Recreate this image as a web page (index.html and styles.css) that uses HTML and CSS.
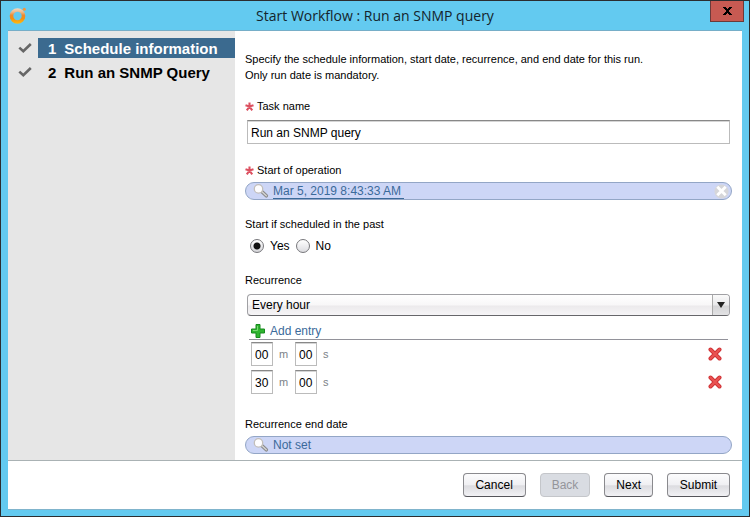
FILE: index.html
```html
<!DOCTYPE html>
<html lang="en">
<head>
<meta charset="utf-8">
<title>Start Workflow : Run an SNMP query</title>
<link rel="stylesheet" href="styles.css">
</head>
<body>
<svg class="defs" aria-hidden="true">
  <defs>
    <linearGradient id="ring" gradientUnits="userSpaceOnUse" x1="0" y1="2" x2="0" y2="18">
      <stop offset="0" stop-color="#f3dcc4"/>
      <stop offset=".25" stop-color="#efb98c"/>
      <stop offset=".45" stop-color="#ee8a30"/>
      <stop offset=".65" stop-color="#f58f10"/>
      <stop offset="1" stop-color="#ffbe10"/>
    </linearGradient>
    <symbol id="check" viewBox="0 0 14 10"><path d="M1.300 4.600 5.300 8.200 12.800 1" fill="none" stroke="#666" stroke-width="2.600"/></symbol>
    <symbol id="star" viewBox="0 0 9 9"><path d="M4.500 .5v4M.5 3.200l4 1.300 4-1.300M1.800 8.300l2.700-3.800L7.200 8.300" stroke="#dc5060" stroke-width="2.100" fill="none"/></symbol>
    <symbol id="lens" viewBox="0 0 16 15">
      <path d="M9 7.800 13.300 11.800" stroke="#8a8a8a" stroke-width="3.600" stroke-linecap="round"/>
      <path d="M9 7.800 13.300 11.800" stroke="#d4d4d4" stroke-width="1.400" stroke-linecap="round"/>
      <circle cx="5.500" cy="4.900" r="4.200" fill="#fdfdff" stroke="#c3bfba" stroke-width="1.300"/>
    </symbol>
    <symbol id="cross" viewBox="0 0 14 14">
      <path d="M2.500 2.500 11.500 11.500M11.500 2.500 2.500 11.500" stroke="#cf3034" stroke-width="4" stroke-linecap="round"/>
      <path d="M2.500 2.500 11.500 11.500M11.500 2.500 2.500 11.500" stroke="#ea5352" stroke-width="2.200" stroke-linecap="round"/>
    </symbol>
  </defs>
</svg>
<div class="window">
  <header class="titlebar">
    <svg class="logo" viewBox="0 0 18 18" aria-hidden="true">
      <circle cx="9.500" cy="10" r="6" fill="none" stroke="url(#ring)" stroke-width="3.600"/>
      <circle cx="16.300" cy="3.300" r="1.500" fill="#f5963a"/>
    </svg>
    <h1 class="title">Start Workflow : Run an SNMP query</h1>
    <button class="close" type="button" aria-label="Close">
      <svg class="close-icon" viewBox="0 0 9 8" aria-hidden="true"><path d="M0 0h3v1h1v1h1V1h1V0h3v1H8v1H7v1H6v2h1v1h1v1h1v1H6V7H5V6H4v1H3v1H0V7h1V6h1V5h1V3H2V2H1V1H0z" fill="#000"/></svg>
    </button>
  </header>
  <div class="body">
    <nav class="steps">
      <div class="step">
        <svg class="check"><use href="#check"/></svg>
        <a class="step-link current" href="#schedule"><span>1</span><span>Schedule information</span></a>
      </div>
      <div class="step">
        <svg class="check"><use href="#check"/></svg>
        <a class="step-link" href="#query"><span>2</span><span>Run an SNMP Query</span></a>
      </div>
    </nav>
    <form class="form" id="schedule">
      <p class="intro">Specify the schedule information, start date, recurrence, and end date for this run.<br>Only run date is mandatory.</p>

      <div class="field">
        <label class="label" for="task"><svg class="star"><use href="#star"/></svg>Task name</label>
        <input class="text" id="task" type="text" value="Run an SNMP query">
      </div>

      <div class="field">
        <div class="label"><svg class="star"><use href="#star"/></svg>Start of operation</div>
        <div class="pill">
          <svg class="lens"><use href="#lens"/></svg>
          <a class="pill-link dated" href="#start">Mar 5, 2019 8:43:33 AM</a>
          <button class="clear" type="button" aria-label="Clear start date">
            <svg class="clear-icon" viewBox="0 0 16 16" aria-hidden="true"><circle cx="8" cy="8" r="7.500" fill="#d6d6d9"/><path d="M3.500 3l9 9M12.500 3l-9 9" stroke="#fff" stroke-width="3"/></svg>
          </button>
        </div>
      </div>

      <fieldset class="field">
        <legend class="label">Start if scheduled in the past</legend>
        <div class="radios">
          <label class="choice"><input class="radio" type="radio" name="past" checked>Yes</label>
          <label class="choice"><input class="radio" type="radio" name="past">No</label>
        </div>
      </fieldset>

      <div class="field">
        <label class="label" for="recurrence">Recurrence</label>
        <div class="select-box">
          <select class="select" id="recurrence"><option>Every hour</option></select>
        </div>
        <div class="entries">
          <button class="add" type="button">
            <svg class="plus" viewBox="0 0 14 14" aria-hidden="true"><path d="M5 .5h4V5h4.500v4H9v4.500H5V9H.5V5H5z" fill="#2fb52f" stroke="#168a1e" stroke-linejoin="round"/><path d="M6.500 2v4.500H2" fill="none" stroke="#7bd873"/></svg>
            Add entry
          </button>
          <div class="entry">
            <input class="text time" type="text" value="00" aria-label="Minutes"><span class="unit">m</span>
            <input class="text time" type="text" value="00" aria-label="Seconds"><span class="unit">s</span>
            <button class="remove" type="button" aria-label="Remove entry"><svg class="cross"><use href="#cross"/></svg></button>
          </div>
          <div class="entry">
            <input class="text time" type="text" value="30" aria-label="Minutes"><span class="unit">m</span>
            <input class="text time" type="text" value="00" aria-label="Seconds"><span class="unit">s</span>
            <button class="remove" type="button" aria-label="Remove entry"><svg class="cross"><use href="#cross"/></svg></button>
          </div>
        </div>
      </div>

      <div class="field">
        <div class="label">Recurrence end date</div>
        <div class="pill">
          <svg class="lens"><use href="#lens"/></svg>
          <a class="pill-link" href="#end">Not set</a>
        </div>
      </div>
    </form>
  </div>
  <footer class="footer">
    <button class="btn wide" type="button">Cancel</button>
    <button class="btn" type="button" disabled>Back</button>
    <button class="btn" type="button">Next</button>
    <button class="btn wide" type="submit" form="schedule">Submit</button>
  </footer>
</div>
</body>
</html>
```
FILE: styles.css
```css
* { box-sizing: border-box; }

body {
  margin: 0;
  font: 12px/16px "Liberation Sans", Arial, sans-serif;
  color: #000;
}

svg { display: block; flex: none; }
.defs { position: absolute; width: 0; height: 0; }
input, select, button { font: inherit; color: inherit; margin: 0; }
button { border: 0; padding: 0; background: none; }

.window {
  display: flex;
  flex-direction: column;
  min-height: 100vh;
  padding: 0 7px 6px;
  border: 1px solid #2b2d30;
  background: #63caf0;
}

.titlebar {
  display: flex;
  align-items: flex-start;
  height: 30px;
  border-bottom: 1px solid #76aec8;
}
.logo { width: 18px; height: 18px; margin-top: 5px; }
.title {
  flex: 1;
  margin: 0;
  padding-left: 14px;
  font: 14px/30px "Open Sans", "Noto Sans", sans-serif;
  text-align: center;
  color: #14242c;
}
.close {
  display: grid;
  place-items: center;
  width: 34px;
  height: 21px;
  margin-right: -2px;
  border: 1px solid #6b3a3a;
  border-top: 0;
  background: #c75a52;
}
.close-icon { width: 9px; height: 8px; }

.body { display: flex; flex: 1; background: #fff; }

.steps {
  flex: none;
  width: 227px;
  padding-top: 7px;
  background: #e6e6e6;
}
.step {
  display: flex;
  align-items: center;
  height: 20px;
  margin-bottom: 4px;
  padding-left: 10px;
}
.check { width: 14px; height: 10px; margin-right: 6px; }
.step-link {
  display: flex;
  flex: 1;
  gap: 8px;
  padding-left: 10px;
  font-size: 15px;
  font-weight: bold;
  line-height: 21px;
  height: 20px;
  color: #000;
  text-decoration: none;
}
.step-link.current { background: #3b6a8f; color: #fff; }

.form { flex: 1; min-width: 0; padding: 20px 10px 6px; }
.intro { margin: 0 0 15px; font-size: 11px; }

.field { margin: 0; padding: 0; border: 0; }
.field + .field { margin-top: 16px; }
.label {
  display: flex;
  align-items: center;
  gap: 3px;
  margin-bottom: 4px;
  padding: 0;
  font-size: 11px;
}
.star { width: 9px; height: 9px; }

.text {
  display: block;
  width: calc(100% - 4px);
  height: 24px;
  margin: 6px 2px 18px;
  padding: 2px 3px 0;
  border: 1px solid #bbb;
  border-top-color: #888;
  background: #fff;
  box-shadow: inset 0 1px #d5d5d5;
}

.pill {
  display: flex;
  align-items: center;
  height: 18px;
  padding: 0 2px 0 7px;
  border: 1px solid #93a6c6;
  border-radius: 9px;
  background: #cdd6f6;
}
.lens { width: 16px; height: 15px; }
.pill-link {
  height: 16px;
  margin-left: 4px;
  line-height: 17px;
  color: #3b6a9a;
  text-decoration: none;
}
.dated { padding-right: 3px; border-bottom: 1px solid #3b6a9a; }
.clear { margin-left: auto; }
.clear-icon { width: 15px; height: 15px; }

.radios { display: flex; gap: 6px; padding-left: 5px; }
.choice { display: flex; align-items: center; gap: 6px; height: 20px; }
.radio {
  appearance: none;
  width: 14px;
  height: 14px;
  border: 1px solid #77777b;
  border-radius: 50%;
  background: linear-gradient(#fff, #dcdce0);
}
.radio:checked { background: radial-gradient(circle, #111 3px, transparent 4px), linear-gradient(#fff, #d4d4d8); }

.select-box { position: relative; margin: 6px 2px 0; }
.select {
  display: block;
  appearance: none;
  width: 100%;
  height: 22px;
  padding: 0 20px 0 4px;
  border: 1px solid #a0a0a4;
  border-bottom-color: #66666a;
  border-radius: 4px;
  background: linear-gradient(#fff, #f8f7f8 50%, #eceaec 55%, #f6f5f7);
}
.select-box::before {
  content: "";
  position: absolute;
  top: 1px;
  right: 1px;
  bottom: 1px;
  width: 16px;
  border-left: 1px solid #aaa;
  border-radius: 0 3px 3px 0;
  background: linear-gradient(#fafafa, #e8e8ea 50%, #d4d4d6 55%, #e2e2e4);
  pointer-events: none;
}
.select-box::after {
  content: "";
  position: absolute;
  top: 8px;
  right: 5px;
  border: solid transparent;
  border-width: 6px 4px 0;
  border-top-color: #222;
  pointer-events: none;
}

.entries { margin: 7px 4px 20px; }
.add {
  display: flex;
  align-items: center;
  gap: 5px;
  width: 100%;
  height: 17px;
  padding-left: 2px;
  border-bottom: 1px solid #92929a;
  color: #3b6a9a;
}
.plus { width: 14px; height: 14px; }
.entry { display: flex; align-items: center; padding: 2px; }
.time { width: 22px; margin: 0; }
.unit { width: 22px; padding-left: 6px; font-size: 11px; color: #7b8288; }
.remove { margin-left: auto; margin-right: 4px; }
.cross { width: 14px; height: 14px; }

.footer {
  display: flex;
  align-items: flex-start;
  justify-content: flex-end;
  gap: 14px;
  padding: 12px;
  border-top: 1px solid #aab2b4;
  border-bottom: 1px solid #80b4cc;
  background: #fff;
}
.btn {
  height: 24px;
  padding: 0 11px;
  border: 1px solid #8a8a8e;
  border-bottom-color: #55555a;
  border-radius: 4px;
  background: linear-gradient(#fcfcfd, #f0f0f3 48%, #dcdce0 54%, #f2f2f5);
}
.wide { width: 63px; }
.btn:disabled {
  border-color: #c4c6ca;
  background: #d9dce2;
  color: #94959a;
}
```
